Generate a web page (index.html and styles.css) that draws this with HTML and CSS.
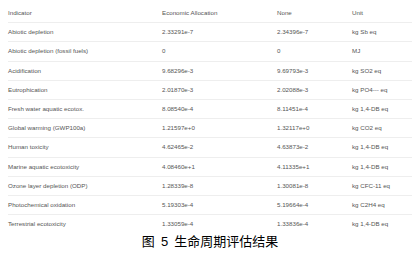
FILE: index.html
```html
<!DOCTYPE html>
<html lang="zh">
<head>
<meta charset="utf-8">
<title>生命周期评估结果</title>
<link rel="stylesheet" href="styles.css">
</head>
<body>
<div class="figure">
  <table class="results">
    <thead>
      <tr><th class="c1">Indicator</th><th class="c2">Economic Allocation</th><th class="c3">None</th><th class="c4">Unit</th></tr>
    </thead>
    <tbody>
      <tr><td>Abiotic depletion</td><td>2.33291e-7</td><td>2.34396e-7</td><td>kg Sb eq</td></tr>
      <tr><td>Abiotic depletion (fossil fuels)</td><td>0</td><td>0</td><td>MJ</td></tr>
      <tr><td>Acidification</td><td>9.68296e-3</td><td>9.69793e-3</td><td>kg SO2 eq</td></tr>
      <tr><td>Eutrophication</td><td>2.01870e-3</td><td>2.02088e-3</td><td>kg PO4--- eq</td></tr>
      <tr><td>Fresh water aquatic ecotox.</td><td>8.08540e-4</td><td>8.11451e-4</td><td>kg 1,4-DB eq</td></tr>
      <tr><td>Global warming (GWP100a)</td><td>1.21597e+0</td><td>1.32117e+0</td><td>kg CO2 eq</td></tr>
      <tr><td>Human toxicity</td><td>4.62465e-2</td><td>4.63873e-2</td><td>kg 1,4-DB eq</td></tr>
      <tr><td>Marine aquatic ecotoxicity</td><td>4.08460e+1</td><td>4.11335e+1</td><td>kg 1,4-DB eq</td></tr>
      <tr><td>Ozone layer depletion (ODP)</td><td>1.28339e-8</td><td>1.30081e-8</td><td>kg CFC-11 eq</td></tr>
      <tr><td>Photochemical oxidation</td><td>5.19303e-4</td><td>5.19664e-4</td><td>kg C2H4 eq</td></tr>
      <tr><td>Terrestrial ecotoxicity</td><td>1.33059e-4</td><td>1.33836e-4</td><td>kg 1,4-DB eq</td></tr>
    </tbody>
  </table>
  <p class="caption">图 5 生命周期评估结果</p>
</div>
</body>
</html>
```
FILE: styles.css
```css
html, body {
  margin: 0;
  padding: 0;
  background: #ffffff;
}

.figure {
  padding: 4px 4px 0 8px;
}

.results {
  width: 404px;
  border-collapse: separate;
  border-spacing: 0;
  table-layout: fixed;
  font-family: "Liberation Sans", Arial, sans-serif;
  font-size: 6.2px;
  color: #555555;
}

.results th,
.results td {
  height: 18.2px;
  padding: 0;
  text-align: left;
  font-weight: normal;
  vertical-align: middle;
  white-space: nowrap;
  border-bottom: 1px solid #eeeeee;
  line-height: 8px;
}

.results tbody tr:last-child td {
  border-bottom: none;
}

.c1 { width: 154px; }
.c2 { width: 115px; }
.c3 { width: 75px; }
.c4 { width: 60px; }

.caption {
  margin: 1px 0 0 0;
  text-align: center;
  font-family: "Liberation Sans", "Noto Sans CJK SC", sans-serif;
  font-size: 13px;
  line-height: 16px;
  word-spacing: 2.5px;
  color: #000000;
}
```
